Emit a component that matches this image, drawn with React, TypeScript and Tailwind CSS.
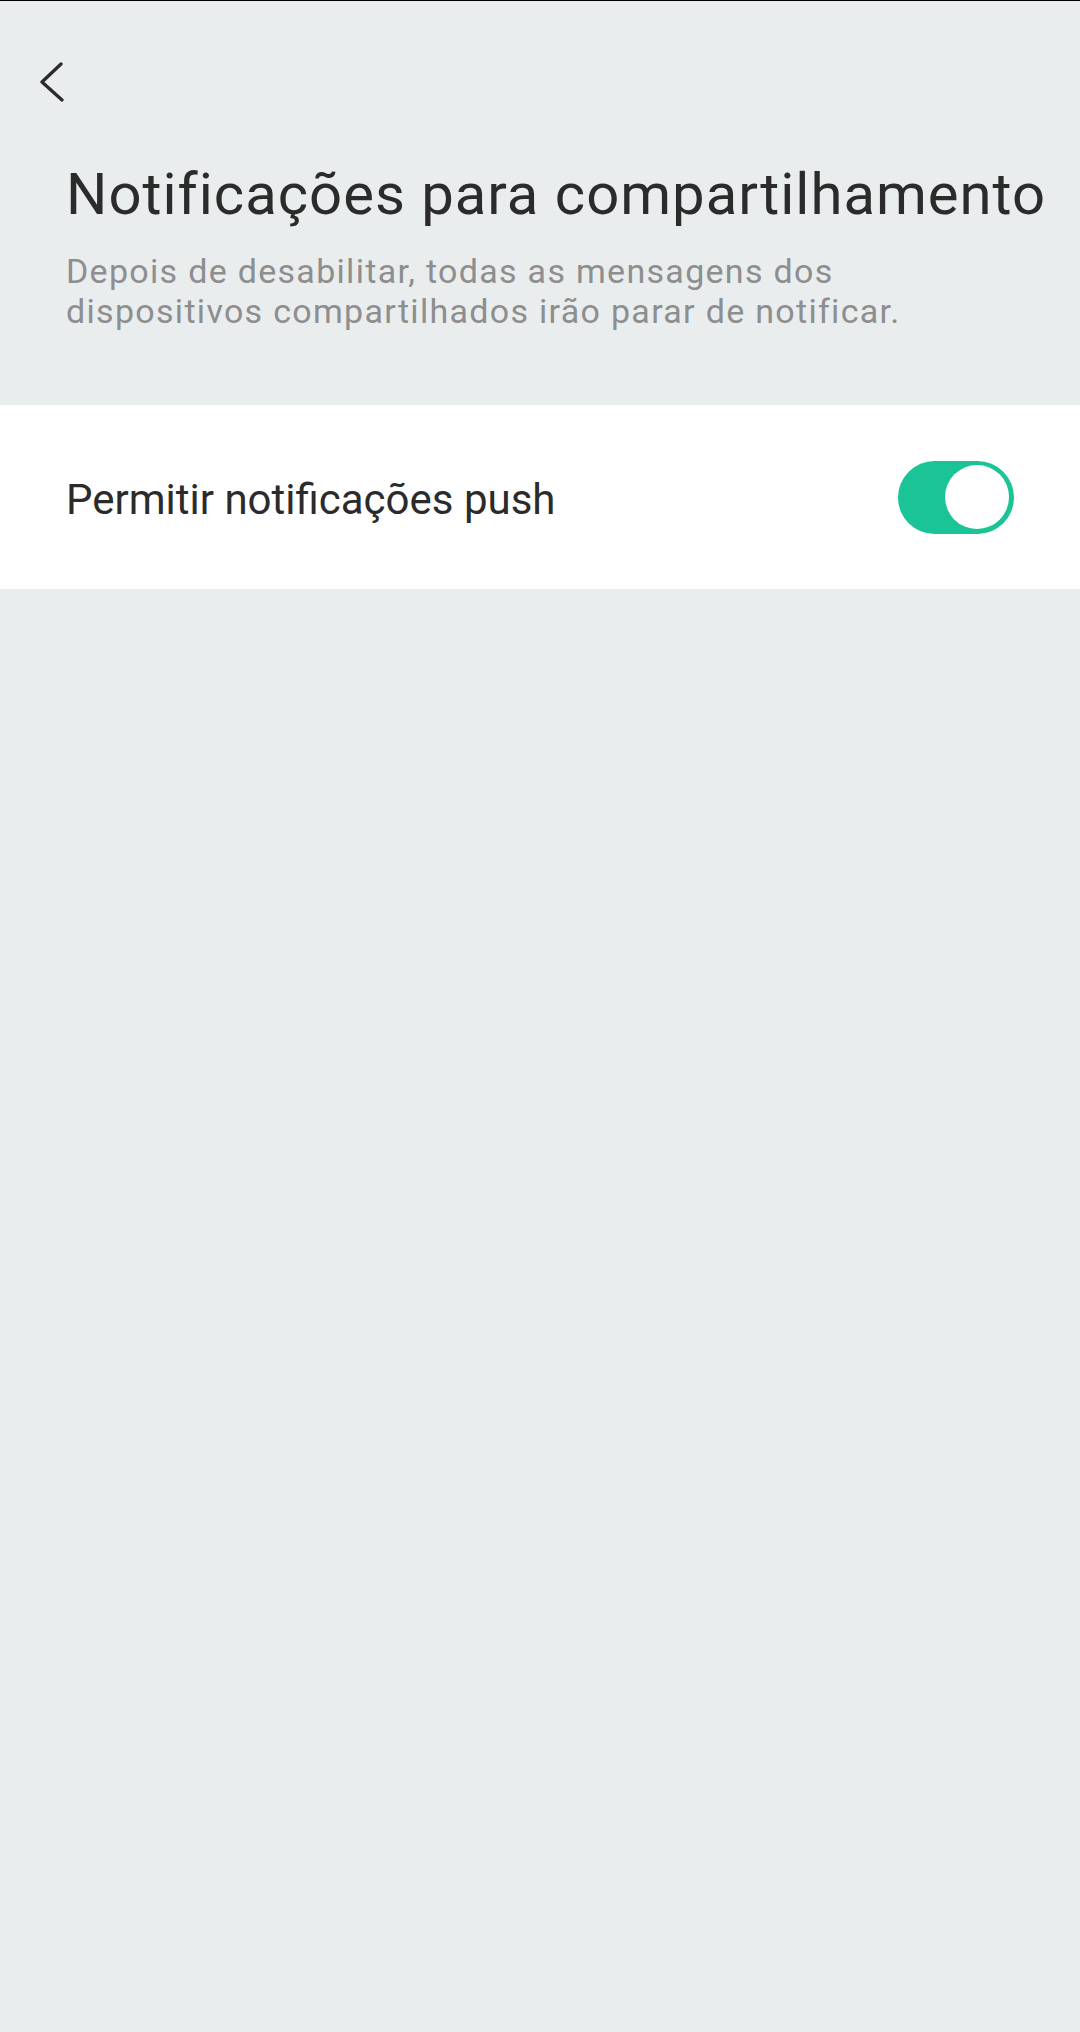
export default function App() {
  return (
    <div className="min-h-[2032px] w-full bg-[#e9edee] border-t border-black font-['Roboto',sans-serif]">
      {/* Back */}
      <div className="pl-[40px] pt-[61px]">
        <svg width="24" height="40" viewBox="0 0 24 40" fill="none">
          <polyline points="21,2 2,20 22,38" stroke="#2b2b2b" strokeWidth="3.3" strokeLinecap="round" strokeLinejoin="round" />
        </svg>
      </div>

      {/* Header text */}
      <div className="pl-[66px] pr-[66px] mt-[58px] mb-[74px]">
        <h1 className="text-[58px] leading-[68px] tracking-[1px] text-[#2b2b2b] font-normal whitespace-nowrap">Notificações para compartilhamento</h1>
        <p className="mt-[23px] text-[34px] leading-[40px] tracking-[1.3px] text-[#8e8e8e]">
          Depois de desabilitar, todas as mensagens dos dispositivos compartilhados irão parar de notificar.
        </p>
      </div>

      {/* Setting row */}
      <div className="h-[184px] bg-white flex items-center justify-between pl-[66px] pr-[66px]">
        <span className="pt-[5px] text-[42px] leading-[48px] text-[#2b2b2b]">Permitir notificações push</span>
        <div className="w-[116px] h-[73px] rounded-full bg-[#1bc496] flex items-center justify-end pr-[5px]">
          <div className="w-[64px] h-[64px] rounded-full bg-white" />
        </div>
      </div>
    </div>
  );
}
